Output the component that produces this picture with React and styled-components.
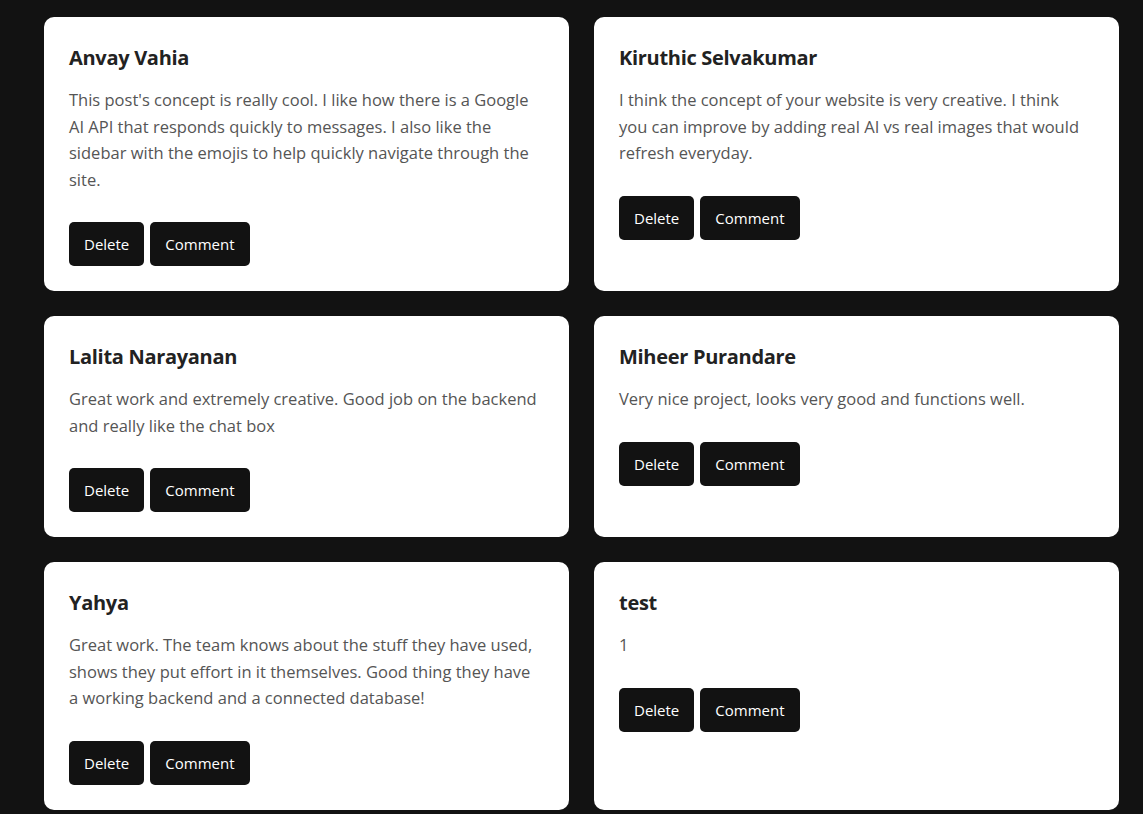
import React from 'react';
import styled, { createGlobalStyle } from 'styled-components';

const reviews = [
  {
    name: 'Anvay Vahia',
    text: "This post's concept is really cool. I like how there is a Google AI API that responds quickly to messages. I also like the sidebar with the emojis to help quickly navigate through the site.",
  },
  {
    name: 'Kiruthic Selvakumar',
    text: 'I think the concept of your website is very creative. I think you can improve by adding real AI vs real images that would refresh everyday.',
  },
  {
    name: 'Lalita Narayanan',
    text: 'Great work and extremely creative. Good job on the backend and really like the chat box',
  },
  {
    name: 'Miheer Purandare',
    text: 'Very nice project, looks very good and functions well.',
  },
  {
    name: 'Yahya',
    text: 'Great work. The team knows about the stuff they have used, shows they put effort in it themselves. Good thing they have a working backend and a connected database!',
  },
  {
    name: 'test',
    text: '1',
  },
];

const App = () => {
  return (
    <>
      <GlobalStyle />
      <Page>
        <ReviewGrid>
          {reviews.map((review) => (
            <ReviewCard key={review.name}>
              <ReviewName>{review.name}</ReviewName>
              <ReviewText>{review.text}</ReviewText>
              <ButtonRow>
                <ActionButton>Delete</ActionButton>
                <ActionButton>Comment</ActionButton>
              </ButtonRow>
            </ReviewCard>
          ))}
        </ReviewGrid>
      </Page>
    </>
  );
};

const GlobalStyle = createGlobalStyle`
  body {
    margin: 0;
    background: #121212;
    font-family: "Open Sans", "Noto Sans", sans-serif;
  }
`;

const Page = styled.div`
  min-height: 814px;
  padding: 17px 24px 0 44px;
  box-sizing: border-box;
  background: #121212;
`;

const ReviewGrid = styled.div`
  display: grid;
  grid-template-columns: 1fr 1fr;
  gap: 25px;
`;

const ReviewCard = styled.div`
  background: #ffffff;
  border-radius: 10px;
  padding: 25px;
`;

const ReviewName = styled.h3`
  margin: 0;
  font-size: 20px;
  line-height: 32px;
  font-weight: 700;
  color: #222222;
  letter-spacing: -0.3px;
`;

const ReviewText = styled.p`
  margin: 13px 0 29px;
  padding-right: 5px;
  font-size: 16.5px;
  line-height: 26.5px;
  color: #555555;
`;

const ButtonRow = styled.div`
  display: flex;
  gap: 6px;
`;

const ActionButton = styled.button`
  height: 44px;
  padding: 0 15px;
  border: none;
  border-radius: 5px;
  background: #121212;
  color: #ffffff;
  font-family: inherit;
  font-size: 15px;
  cursor: pointer;
`;

export default App;
